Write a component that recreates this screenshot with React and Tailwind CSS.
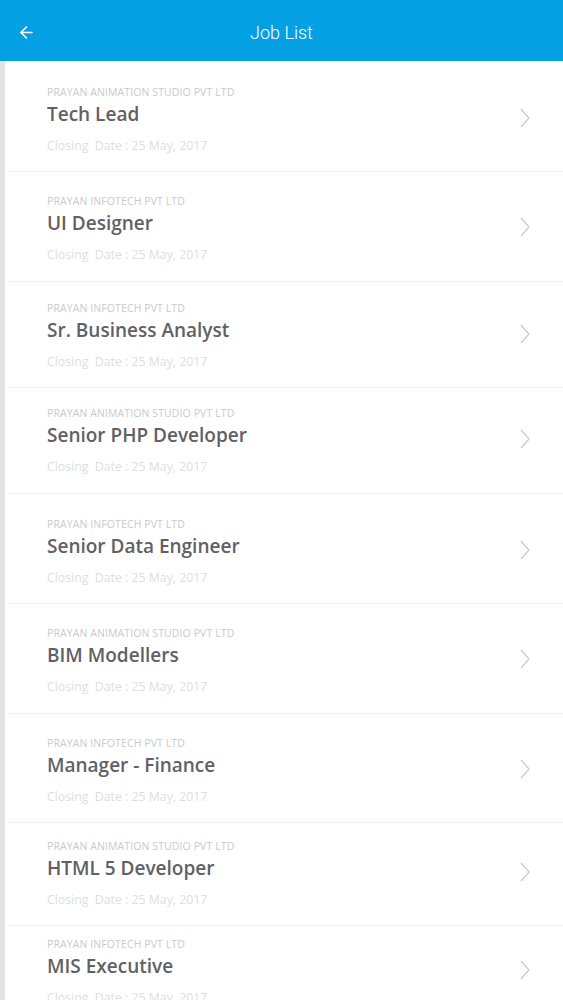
import React from "react";
import { ArrowLeft } from "lucide-react";

const jobs = [
    { company: "PRAYAN ANIMATION STUDIO PVT LTD", title: "Tech Lead", row: "h-[111px] pt-[25px]" },
    { company: "PRAYAN INFOTECH PVT LTD", title: "UI Designer", row: "h-[110px] pt-[23px]" },
    { company: "PRAYAN INFOTECH PVT LTD", title: "Sr. Business Analyst", row: "h-[106px] pt-[20px]" },
    { company: "PRAYAN ANIMATION STUDIO PVT LTD", title: "Senior PHP Developer", row: "h-[106px] pt-[19px]" },
    { company: "PRAYAN INFOTECH PVT LTD", title: "Senior Data Engineer", row: "h-[110px] pt-[24px]" },
    { company: "PRAYAN ANIMATION STUDIO PVT LTD", title: "BIM Modellers", row: "h-[110px] pt-[23px]" },
    { company: "PRAYAN INFOTECH PVT LTD", title: "Manager - Finance", row: "h-[109px] pt-[23px]" },
    { company: "PRAYAN ANIMATION STUDIO PVT LTD", title: "HTML 5 Developer", row: "h-[103px] pt-[17px]" },
    { company: "PRAYAN INFOTECH PVT LTD", title: "MIS Executive", row: "h-[110px] pt-[12px]" },
];

function Chevron() {
    return (
        <svg width="12" height="20" viewBox="0 0 12 20" fill="none">
            <polyline points="2,1 10,10 2,19" stroke="#cbcbcb" strokeWidth="1.3" />
        </svg>
    );
}

export default function App() {
    return (
        <div className="w-[563px] h-[1000px] overflow-hidden bg-white" style={{ fontFamily: '"Open Sans", sans-serif' }}>
            {/* header */}
            <div className="h-[61px] bg-[#04a0e4] flex items-center relative pt-[4px]">
                <button className="pl-[17px] text-white">
                    <ArrowLeft size={19} strokeWidth={2} />
                </button>
                <div className="absolute left-0 right-0 text-center text-white text-[18px] font-light pointer-events-none" style={{ fontFamily: "Roboto, sans-serif" }}>
                    Job List
                </div>
            </div>

            <div className="flex">
                <div className="w-[5px] bg-[#e3e3e3] shrink-0"></div>
                <div className="flex-1 pl-[3px]">
                    {jobs.map((job, index) => (
                        <div key={index} className={"border-b border-[#efefef] " + job.row}>
                            <div className="flex items-start">
                                <div className="flex-1 pl-[39px]">
                                    <div className="text-[10.5px] leading-[12px] text-[#cacaca] tracking-[0.1px]">
                                        {job.company}
                                    </div>
                                    <div className="mt-[4px] text-[19px] leading-[24px] font-semibold text-[#616165]">
                                        {job.title}
                                    </div>
                                    <div className="mt-[12px] text-[12.3px] leading-[16px] text-[#dedede]">
                                        Closing&nbsp; Date : 25 May, 2017
                                    </div>
                                </div>
                                <div className="pr-[32px] pt-[22px]">
                                    <Chevron />
                                </div>
                            </div>
                        </div>
                    ))}
                </div>
            </div>
        </div>
    );
}
